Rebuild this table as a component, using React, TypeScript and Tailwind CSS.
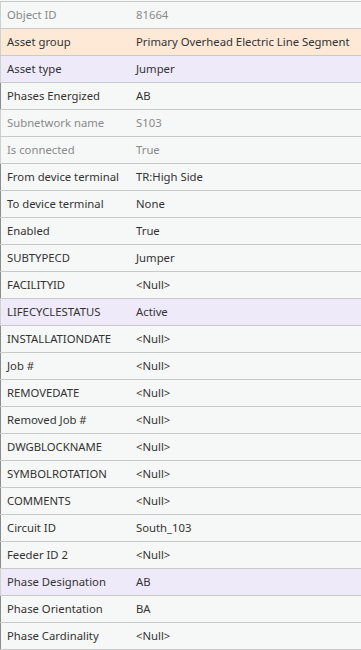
import React from "react";

type Row = { l: string; v: string; kind?: "ro" | "peach" | "purple" };

const rows: Row[] = [
  { l: "Object ID", v: "81664", kind: "ro" },
  { l: "Asset group", v: "Primary Overhead Electric Line Segment", kind: "peach" },
  { l: "Asset type", v: "Jumper", kind: "purple" },
  { l: "Phases Energized", v: "AB" },
  { l: "Subnetwork name", v: "S103", kind: "ro" },
  { l: "Is connected", v: "True", kind: "ro" },
  { l: "From device terminal", v: "TR:High Side" },
  { l: "To device terminal", v: "None" },
  { l: "Enabled", v: "True" },
  { l: "SUBTYPECD", v: "Jumper" },
  { l: "FACILITYID", v: "<Null>" },
  { l: "LIFECYCLESTATUS", v: "Active", kind: "purple" },
  { l: "INSTALLATIONDATE", v: "<Null>" },
  { l: "Job #", v: "<Null>" },
  { l: "REMOVEDATE", v: "<Null>" },
  { l: "Removed Job #", v: "<Null>" },
  { l: "DWGBLOCKNAME", v: "<Null>" },
  { l: "SYMBOLROTATION", v: "<Null>" },
  { l: "COMMENTS", v: "<Null>" },
  { l: "Circuit ID", v: "South_103" },
  { l: "Feeder ID 2", v: "<Null>" },
  { l: "Phase Designation", v: "AB", kind: "purple" },
  { l: "Phase Orientation", v: "BA" },
  { l: "Phase Cardinality", v: "<Null>" },
];

export default function App() {
  return (
    <div
      className="w-[361px] h-[650px] bg-[#f6f8f7] pt-[1px] overflow-hidden"
      style={{ fontFamily: '"Noto Sans", "Open Sans", sans-serif' }}
    >
      <div className="border-t border-[#c9c9c9]">
        {rows.map((r, i) => {
          const bg =
            r.kind === "peach"
              ? "bg-[#fde9d6]"
              : r.kind === "purple"
              ? "bg-[#efeafa]"
              : "bg-[#f6f8f7]";
          const edge =
            r.kind === "ro" || r.kind === "peach" || r.kind === "purple"
              ? "border-[#d0d0d0]"
              : "border-[#8c8c8c]";
          const txt = r.kind === "ro" ? "text-[#8a8a8a]" : "text-[#333333]";
          return (
            <div
              key={i}
              className={`flex h-[27px] border-b border-[#c9c9c9] ${bg}`}
            >
              <div className={`w-[1px] border-l ${edge}`} />
              <div
                className={`flex items-center w-[135px] pl-[6px] text-[11.3px] whitespace-nowrap ${txt}`}
              >
                {r.l}
              </div>
              <div
                className={`flex items-center flex-1 text-[11.3px] whitespace-nowrap ${txt}`}
              >
                {r.v}
              </div>
            </div>
          );
        })}
      </div>
    </div>
  );
}
